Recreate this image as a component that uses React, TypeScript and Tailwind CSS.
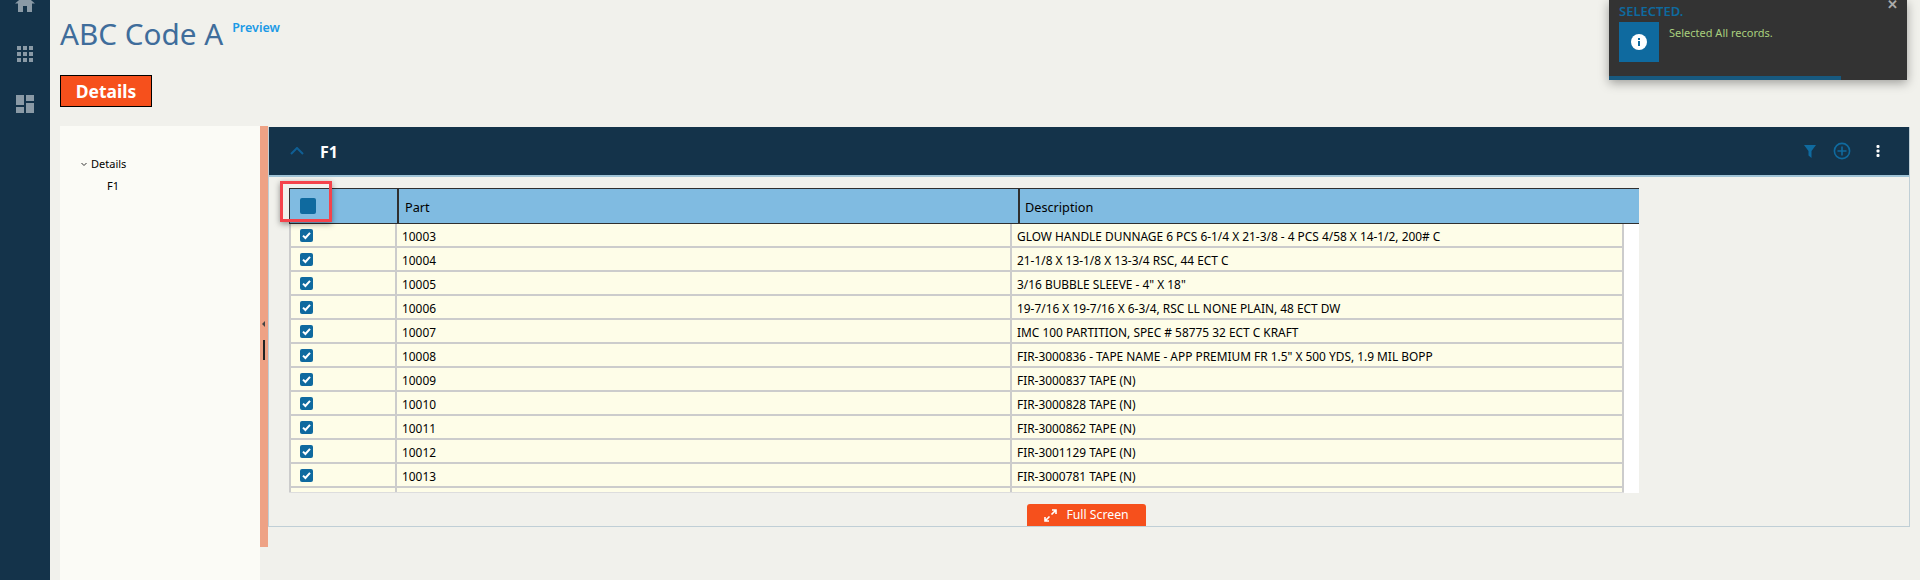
import React from "react";

const rows: [string, string][] = [
  ["10003", 'GLOW HANDLE DUNNAGE 6 PCS 6-1/4 X 21-3/8 - 4 PCS 4/58 X 14-1/2, 200# C'],
  ["10004", "21-1/8 X 13-1/8 X 13-3/4 RSC, 44 ECT C"],
  ["10005", '3/16 BUBBLE SLEEVE - 4" X 18"'],
  ["10006", "19-7/16 X 19-7/16 X 6-3/4, RSC LL NONE PLAIN, 48 ECT DW"],
  ["10007", "IMC 100 PARTITION, SPEC # 58775 32 ECT C KRAFT"],
  ["10008", 'FIR-3000836 - TAPE NAME - APP PREMIUM FR 1.5" X 500 YDS, 1.9 MIL BOPP'],
  ["10009", "FIR-3000837 TAPE (N)"],
  ["10010", "FIR-3000828 TAPE (N)"],
  ["10011", "FIR-3000862 TAPE (N)"],
  ["10012", "FIR-3001129 TAPE (N)"],
  ["10013", "FIR-3000781 TAPE (N)"],
];

function Check() {
  return (
    <span className="mt-px flex h-[13px] w-[13px] items-center justify-center rounded-[2px] bg-[#0f6a9f]">
      <svg width="11" height="11" viewBox="0 0 11 11" fill="none">
        <path d="M2 5.6 L4.4 8 L9 2.8" stroke="#fff" strokeWidth="2" />
      </svg>
    </span>
  );
}

export default function App() {
  return (
    <div className="relative flex h-[580px] w-[1920px] overflow-hidden bg-[#f1f1ec] font-['Noto_Sans',sans-serif]">
      <aside className="flex w-[50px] shrink-0 flex-col items-center bg-[#14334a]">
        <svg className="-mt-[5px]" width="20" height="18" viewBox="0 0 20 18" fill="#8a9aa6">
          <path d="M10 0 L20 8.5 L17 8.5 L17 17 L12 17 L12 11 L8 11 L8 17 L3 17 L3 8.5 L0 8.5 Z" />
        </svg>
        <svg className="mt-[33px]" width="16" height="16" viewBox="0 0 16 16" fill="#8a9aa6">
          {[0, 6, 12].flatMap((y) =>
            [0, 6, 12].map((x) => <rect key={`${x}-${y}`} x={x} y={y} width="4" height="4" />)
          )}
        </svg>
        <svg className="mt-[33px]" width="18" height="18" viewBox="0 0 18 18" fill="#8a9aa6">
          <rect x="0" y="0" width="8" height="10" />
          <rect x="10" y="0" width="8" height="6" />
          <rect x="0" y="12" width="8" height="6" />
          <rect x="10" y="8" width="8" height="10" />
        </svg>
      </aside>

      <main className="flex min-w-0 flex-1 flex-col">
        <div className="flex h-[75px] shrink-0 items-start pl-[10px]">
          <h1 className="mt-[14px] text-[29.7px] leading-[40px] text-[#3f6d9b]">ABC Code A</h1>
          <a className="ml-[9px] mt-[20px] text-[12.5px] font-semibold leading-[16px] text-[#1b9ae6]">Preview</a>
        </div>
        <div className="flex h-[51px] shrink-0 items-start pl-[10px]">
          <div className="flex h-[32px] w-[92px] items-center justify-center border border-black bg-[#f6501c] text-[17.5px] font-bold text-white">
            Details
          </div>
        </div>
        <div className="flex min-h-0 flex-1 pl-[10px]">
          <nav className="h-full w-[200px] shrink-0 bg-[#fbfbf6] pl-[20px] pt-[29px] text-[11px] text-black">
            <div className="flex h-[18px] items-center gap-[3px]">
              <svg width="8" height="8" viewBox="0 0 8 8" fill="none">
                <path d="M1.5 3 L4 5.5 L6.5 3" stroke="#333" strokeWidth="1" />
              </svg>
              <span>Details</span>
            </div>
            <div className="mt-[4px] pl-[27px] leading-[18px]">F1</div>
          </nav>
          <div className="relative h-[421px] w-[8px] shrink-0 bg-[#eea285]">
            <span className="absolute left-[2px] top-[195px] h-0 w-0 border-y-[3px] border-r-[3px] border-y-transparent border-r-[#444]" />
            <span className="absolute left-[3px] top-[214px] h-[20px] w-[2px] bg-[#222]" />
          </div>
          <section className="mt-px flex h-[400px] w-[1642px] shrink-0 flex-col border-x border-b border-[#c0cfd6]">
            <header className="flex h-[50px] shrink-0 items-center border-b-2 border-[#9fc3d6] bg-[#14334a] pl-[21px] pr-[29px]">
              <svg width="14" height="8" viewBox="0 0 14 8" fill="none">
                <path d="M1 7 L7 1 L13 7" stroke="#0f5f94" strokeWidth="2" />
              </svg>
              <span className="ml-[16px] mt-px text-[16px] font-bold text-white">F1</span>
              <div className="ml-auto flex items-center">
                <svg width="12" height="13" viewBox="0 0 12 13" fill="#0f6a9f">
                  <path d="M0 0 H12 L7.5 6 V13 L4.5 10.5 V6 Z" />
                </svg>
                <svg className="ml-[17px]" width="18" height="18" viewBox="0 0 18 18" fill="none" stroke="#0f6a9f" strokeWidth="1.6">
                  <circle cx="9" cy="9" r="7.6" />
                  <path d="M4.5 9 H13.5 M9 4.5 V13.5" />
                </svg>
                <svg className="ml-[25px]" width="4" height="14" viewBox="0 0 4 14" fill="#fff">
                  <rect x="0.5" y="1" width="3" height="3" rx="1" />
                  <rect x="0.5" y="5.5" width="3" height="3" rx="1" />
                  <rect x="0.5" y="10" width="3" height="3" rx="1" />
                </svg>
              </div>
            </header>
            <div className="relative min-h-0 flex-1 pl-[20px] pt-[11px]">
              <div className="relative w-[1350px] bg-white">
                <div className="flex h-[36px] border-y border-[#2f2f2f] bg-[#80bbe1] text-[12.7px] text-black">
                  <div className="flex w-[110px] items-center border-l border-r-2 border-[#2f2f2f] pl-[10px]">
                    <span className="h-4 w-4 rounded-[2px] bg-[#0f6a9f]" />
                  </div>
                  <div className="flex w-[621px] items-center border-r-2 border-[#2f2f2f] pl-[6px] pt-[3px]">Part</div>
                  <div className="flex items-center pl-[5px] pt-[3px]">Description</div>
                </div>
                <div className="h-[269px] overflow-hidden">
                  {rows.map(([p, d]) => (
                    <div key={p} className="flex h-[24px] w-[1335px] border-b-2 border-[#cccccc] bg-[#fefde8] text-[11.9px] text-black">
                      <div className="flex w-[108px] items-center border-x-2 border-[#cccccc] pl-[9px]"><Check /></div>
                      <div className="flex w-[615px] items-center border-r-2 border-[#cccccc] pl-[5px] pt-[3px]">{p}</div>
                      <div className="flex flex-1 items-center border-r-2 border-[#cccccc] pl-[5px] pt-[3px]">{d}</div>
                    </div>
                  ))}
                  <div className="flex h-[5px] w-[1335px] border-b border-[#dddddd] bg-[#fefde8]">
                    <div className="w-[108px] border-x-2 border-[#cccccc]" />
                    <div className="w-[615px] border-r-2 border-[#cccccc]" />
                    <div className="flex-1 border-r-2 border-[#cccccc]" />
                  </div>
                </div>
              </div>
              <div className="absolute bottom-0 left-[758px] flex h-[22px] w-[119px] items-center justify-center gap-[9px] rounded-t-[3px] bg-[#f6501c] text-[12.25px] text-white">
                <svg width="13" height="13" viewBox="0 0 13 13" fill="none" stroke="#fff" strokeWidth="1.6">
                  <path d="M7.5 5.5 L12 1 M8 1 H12 V5 M5.5 7.5 L1 12 M1 8 V12 H5" />
                </svg>
                <span>Full Screen</span>
              </div>
            </div>
          </section>
        </div>
      </main>

      <div className="absolute left-[280px] top-[181px] h-[41px] w-[52px] border-[3px] border-[#f4434b] shadow-[0_2px_6px_rgba(0,0,0,0.4)]" />

      <div className="absolute right-[13px] top-0 h-[80px] w-[298px] bg-[#333333] pl-[10px] shadow-[0_3px_10px_rgba(0,0,0,0.35)]">
        <div className="mt-[3px] text-[13px] font-semibold leading-[16px] text-[#0f6a9f]">SELECTED.</div>
        <div className="mt-[3px] flex items-start">
          <div className="flex h-[40px] w-[40px] items-center justify-center bg-[#0f6a9f]">
            <svg width="16" height="16" viewBox="0 0 16 16">
              <circle cx="8" cy="8" r="8" fill="#fff" />
              <rect x="7" y="7" width="2" height="5" fill="#0f6a9f" />
              <rect x="7" y="4" width="2" height="2" fill="#0f6a9f" />
            </svg>
          </div>
          <span className="ml-[10px] mt-[3px] text-[11px] leading-[16px] text-[#a9cf7d]">Selected All records.</span>
        </div>
        <span className="absolute right-[9px] top-0 text-[13px] font-bold leading-[9px] text-[#aaaaaa]">✕</span>
        <div className="absolute bottom-0 left-0 h-1 w-[232px] bg-[#17597f]" />
      </div>
    </div>
  );
}
